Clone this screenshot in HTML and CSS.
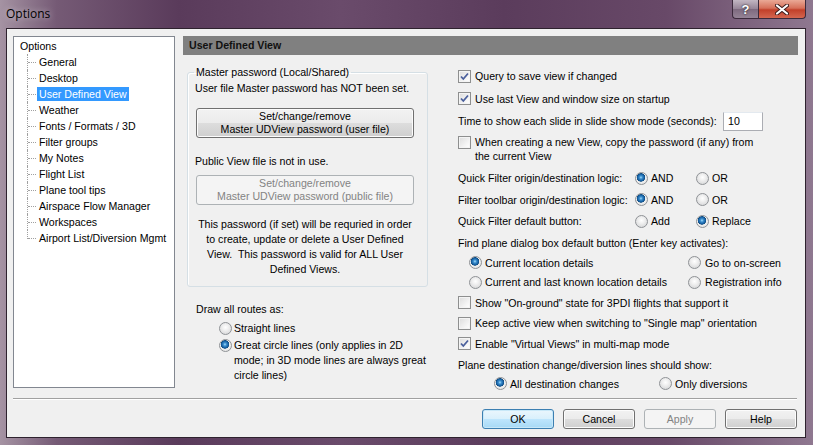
FILE: index.html
```html
<!DOCTYPE html>
<html lang="en">
<head>
    <meta charset="UTF-8">
    <title>Options</title>
    <link rel="stylesheet" href="styles.css">
</head>
<body>
    <div class="titlebar">
        <span class="title">Options</span>
        <div class="caption">
            <div class="cbtn help">?</div>
            <div class="cbtn close">
                <svg width="14" height="11" viewBox="0 0 14 11"><path d="M2 1.5L12 9.5M12 1.5L2 9.5" stroke="#3a1a1a" stroke-width="4" stroke-linecap="round"/><path d="M2 1.5L12 9.5M12 1.5L2 9.5" stroke="#fff" stroke-width="2.2" stroke-linecap="round"/></svg>
            </div>
        </div>
    </div>
    <div class="client">
        <div class="main">
            <div class="tree">
                <div class="root">Options</div>
                <ul>
                    <li><span>General</span></li>
                    <li><span>Desktop</span></li>
                    <li><span class="sel">User Defined View</span></li>
                    <li><span>Weather</span></li>
                    <li><span>Fonts / Formats / 3D</span></li>
                    <li><span>Filter groups</span></li>
                    <li><span>My Notes</span></li>
                    <li><span>Flight List</span></li>
                    <li><span>Plane tool tips</span></li>
                    <li><span>Airspace Flow Manager</span></li>
                    <li><span>Workspaces</span></li>
                    <li><span>Airport List/Diversion Mgmt</span></li>
                </ul>
            </div>
            <div class="page">
                <div class="page-head">User Defined View</div>
                <div class="page-body">
                    <div class="col-left">
                        <fieldset class="group">
                            <legend>Master password (Local/Shared)</legend>
                            <div class="line">User file Master password has NOT been set.</div>
                            <div class="btn big">Set/change/remove<br>Master UDView password (user file)</div>
                            <div class="line gap-public">Public View file is not in use.</div>
                            <div class="btn big disabled">Set/change/remove<br>Master UDView password (public file)</div>
                            <div class="note">This password (if set) will be requried in order<br>to create, update or delete a User Defined<br>View.&nbsp; This password is valid for ALL User<br>Defined Views.</div>
                        </fieldset>
                        <div class="routes-label">Draw all routes as:</div>
                        <div class="ropt first"><span class="rb"></span><span>Straight lines</span></div>
                        <div class="ropt wrap"><span class="rb on"></span><span>Great circle lines (only applies in 2D<br>mode; in 3D mode lines are always great<br>circle lines)</span></div>
                    </div>
                    <div class="col-right">
                        <div class="r h22"><span class="cb on"><svg viewBox="0 0 11 11"><path d="M2 5.5L4.3 8L9 2.5"/></svg></span>Query to save view if changed</div>
                        <div class="r h23"><span class="cb on"><svg viewBox="0 0 11 11"><path d="M2 5.5L4.3 8L9 2.5"/></svg></span>Use last View and window size on startup</div>
                        <div class="r h22"><span class="time-label">Time to show each slide in slide show mode (seconds):</span><span class="edit">10</span></div>
                        <div class="r multi"><span class="cb"></span><span>When creating a new View, copy the password (if any) from<br>the current View</span></div>
                        <div class="r h22"><span class="label">Quick Filter origin/destination logic:</span><span class="opt and"><span class="rb on"></span>AND</span><span class="opt"><span class="rb"></span>OR</span></div>
                        <div class="r h21"><span class="label">Filter toolbar origin/destination logic:</span><span class="opt and"><span class="rb on"></span>AND</span><span class="opt"><span class="rb"></span>OR</span></div>
                        <div class="r h22"><span class="label">Quick Filter default button:</span><span class="opt and"><span class="rb"></span>Add</span><span class="opt"><span class="rb on"></span>Replace</span></div>
                        <div class="r h21">Find plane dialog box default button (Enter key activates):</div>
                        <div class="r h19 find"><span class="opt wide"><span class="rb on"></span>Current location details</span><span class="opt"><span class="rb"></span><span class="g4">Go to on-screen</span></span></div>
                        <div class="r h20 find"><span class="opt wide"><span class="rb"></span>Current and last known location details</span><span class="opt"><span class="rb"></span><span class="g4">Registration info</span></span></div>
                        <div class="r h21"><span class="cb"></span>Show "On-ground" state for 3PDI flights that support it</div>
                        <div class="r h20"><span class="cb"></span>Keep active view when switching to "Single map" orientation</div>
                        <div class="r h21"><span class="cb on"><svg viewBox="0 0 11 11"><path d="M2 5.5L4.3 8L9 2.5"/></svg></span>Enable "Virtual Views" in multi-map mode</div>
                        <div class="r h21">Plane destination change/diversion lines should show:</div>
                        <div class="r h17 dest"><span class="opt mid"><span class="rb on"></span>All destination changes</span><span class="opt"><span class="rb"></span>Only diversions</span></div>
                    </div>
                </div>
            </div>
        </div>
        <div class="sep"></div>
        <div class="buttons">
            <div class="btn dlg default">OK</div>
            <div class="btn dlg">Cancel</div>
            <div class="btn dlg disabled">Apply</div>
            <div class="btn dlg">Help</div>
        </div>
    </div>
</body>
</html>
```

FILE: styles.css
```css
*{
    box-sizing:border-box;
}
body{
    margin:0;
    width:813px;
    height:445px;
    overflow:hidden;
    font-family:"Liberation Sans", Arial, sans-serif;
    font-size:10.6px;
    color:#000;
    background:linear-gradient(90deg,#a593a3 0%,#755a75 7%,#5a3b5b 22%,#6a4b6b 42%,#5b3c5c 62%,#684968 82%,#8f7890 100%);
}
.titlebar{
    height:28px;
    display:flex;
    align-items:flex-start;
}
.title{
    font-family:"Open Sans", sans-serif;
    font-size:12px;
    line-height:28px;
    margin-left:6px;
    color:#000;
    text-shadow:0 0 6px rgba(255,255,255,0.6);
}
.caption{
    margin-left:auto;
    margin-right:7px;
    display:flex;
}
.cbtn{
    height:19px;
    display:flex;
    align-items:center;
    justify-content:center;
    border:1px solid #3c2a3c;
    border-top:none;
}
.help{
    width:26px;
    border-radius:0 0 0 4px;
    border-right:none;
    background:linear-gradient(#c2b6c2,#978698 48%,#7e6a7f 52%,#958396);
    color:#fff;
    font-weight:bold;
    font-size:13px;
    text-shadow:0 0 2px #000;
}
.close{
    width:48px;
    border-radius:0 0 4px 0;
    background:linear-gradient(#eaa996,#d6705a 45%,#c2402a 55%,#d46650);
}
.client{
    margin-left:6px;
    width:800px;
    height:410px;
    border:1px solid #2e222e;
    background:#f0f0f0;
}
.main{
    display:flex;
    padding:7px 0 0 6px;
    height:359px;
}
.tree{
    width:162px;
    height:352px;
    border:1px solid #828790;
    background:#fff;
    padding:1px 0 0 6px;
    line-height:16px;
}
.tree ul{
    list-style:none;
    margin:0 0 0 7px;
    padding:0;
}
.tree li{
    position:relative;
    height:16px;
    padding-left:10px;
}
.tree li::before{
    content:'';
    position:absolute;
    left:0;
    top:0;
    height:16px;
    border-left:1px dotted #a0a0a0;
}
.tree li:last-child::before{
    height:9px;
}
.tree li::after{
    content:'';
    position:absolute;
    left:1px;
    top:8px;
    width:8px;
    border-top:1px dotted #a0a0a0;
}
.tree li span{
    display:inline-block;
    padding:0 2px;
    line-height:14px;
    vertical-align:top;
    margin-top:1px;
}
.tree .sel{
    background:#3399ff;
    color:#fff;
}
.page{
    margin-left:8px;
    width:615px;
}
.page-head{
    height:19px;
    line-height:19px;
    background:#808080;
    font-weight:bold;
    padding-left:6px;
    color:#111;
}
.page-body{
    display:flex;
}
.col-left{
    margin-left:4px;
    width:241px;
}
.group{
    margin:10px 0 0 0;
    width:241px;
    border:1px solid #d5dfe5;
    border-radius:3px;
    padding:3px 6px 9px 6px;
    min-width:0;
    box-shadow:inset 1px 1px 0 #fff;
}
.group legend{
    padding:0 2px;
    line-height:14px;
}
.line{
    line-height:13px;
    margin-left:1px;
}
.gap-public{
    margin-top:17px;
}
.btn{
    border:1px solid #707070;
    border-radius:3px;
    background:linear-gradient(#f2f2f2,#ebebeb 50%,#dddddd 50%,#cfcfcf);
    box-shadow:inset 0 0 0 1px #fcfcfc;
    text-align:center;
}
.big{
    width:218px;
    height:30px;
    margin:13px 0 0 2px;
    line-height:13px;
    padding-top:1px;
}
.big.disabled{
    margin-top:7px;
}
.btn.disabled{
    border-color:#adb2b5;
    background:#f4f4f4;
    color:#838383;
    box-shadow:none;
}
.note{
    width:218px;
    margin:12px 0 0 2px;
    text-align:center;
    line-height:15px;
}
.routes-label{
    margin:16px 0 0 9px;
    line-height:13px;
}
.ropt{
    display:flex;
    align-items:flex-start;
    padding-left:32px;
    white-space:nowrap;
}
.ropt .rb{
    margin-right:2px;
}
.ropt.first{
    margin-top:6px;
    line-height:13px;
}
.ropt.wrap{
    margin-top:3px;
    line-height:15px;
}
.ropt.wrap .rb{
    margin-top:1px;
}
.rb{
    flex:none;
    display:inline-block;
    width:13px;
    height:13px;
    border-radius:50%;
    border:1px solid #8f9296;
    background:radial-gradient(circle at 50% 40%,#ffffff 0,#f0f0f0 35%,#cfd0d2 100%);
    margin-right:3px;
}
.rb.on{
    background:radial-gradient(circle at 45% 40%,#a6e2fb 0,#3d8fd0 1.5px,#125b9c 3.5px,#0f4a7e 4px,#f0f0f0 4.5px,#dcdcdc 100%);
}
.col-right{
    margin-left:30px;
    width:339px;
    padding-top:10px;
}
.r{
    display:flex;
    align-items:center;
    white-space:nowrap;
    height:21px;
}
.h17{height:17px;}
.h19{height:19px;}
.h20{height:20px;}
.h22{height:22px;}
.h23{height:23px;}
.r.multi{
    height:35px;
    align-items:flex-start;
    padding-top:3px;
    line-height:14px;
}
.r.multi .cb{
    margin-top:1px;
}
.cb{
    flex:none;
    display:inline-block;
    width:13px;
    height:13px;
    border:1px solid #8e8f8f;
    background:linear-gradient(135deg,#dcdcdc,#f6f6f6 70%,#fff);
    box-shadow:inset 0 0 0 1px #f4f4f4;
    margin-right:4px;
}
.cb svg{
    display:block;
    width:11px;
    height:11px;
}
.cb svg path{
    fill:none;
    stroke:#4a5f9c;
    stroke-width:1.8;
}
.time-label{
    width:265px;
}
.edit{
    width:40px;
    height:19px;
    border:1px solid #abadb3;
    border-top-color:#e3e9ef;
    background:#fff;
    padding-left:4px;
    line-height:17px;
}
.label{
    width:177px;
}
.opt{
    display:flex;
    align-items:center;
}
.opt.and{
    width:61px;
}
.find{
    padding-left:11px;
}
.opt.wide{
    width:219px;
}
.g4{
    margin-left:1px;
}
.dest{
    padding-left:36px;
}
.opt.mid{
    width:165px;
}
.sep{
    margin:10px 0 0 6px;
    width:784px;
    height:2px;
    border-top:1px solid #a0a0a0;
    border-bottom:1px solid #fff;
}
.buttons{
    display:flex;
    justify-content:flex-end;
    gap:9px;
    padding-right:8px;
    margin-top:9px;
}
.dlg{
    width:72px;
    height:20px;
    line-height:18px;
}
.dlg.default{
    border-color:#3c7fb1;
    background:linear-gradient(#eaf6fd,#d9f0fc 50%,#bee6fd 50%,#a7d9f5);
    box-shadow:inset 0 0 0 1px #c8e8f8;
}
```
